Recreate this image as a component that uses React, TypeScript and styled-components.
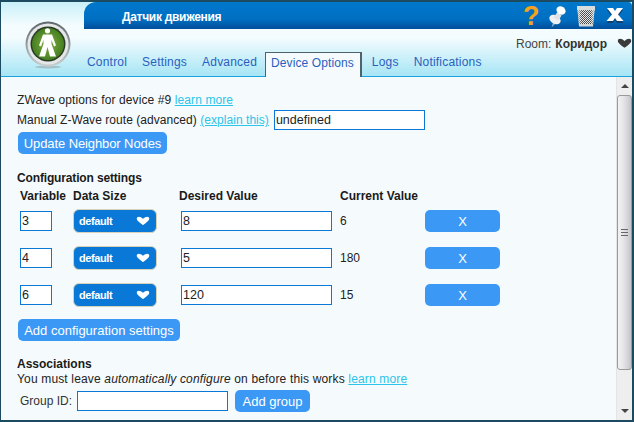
import React from 'react';
import styled, { createGlobalStyle } from 'styled-components';

const GlobalStyle = createGlobalStyle`
    html, body {
        margin: 0;
        padding: 0;
        overflow: hidden;
    }
    body {
        font-family: "Liberation Sans", Arial, sans-serif;
        font-size: 12px;
        color: #222;
    }
`;

const Frame = styled.div`
    width: 634px;
    height: 422px;
    box-sizing: border-box;
    padding: 2px 2px 2px 1px;
    background: #1c4a60;
    display: flex;
    flex-direction: column;
`;

const Header = styled.header`
    height: 75px;
    flex: none;
    display: flex;
    background: linear-gradient(#c8f0f9 0%, #f4fcfe 32%, #f4fcfe 48%, #a6e5f5 100%);
    border-bottom: 1px solid #1aa3dc;
    box-sizing: border-box;
`;

const LogoColumn = styled.div`
    width: 83px;
    flex: none;
    padding: 19px 0 0 24px;
    box-sizing: border-box;
`;

const HeaderMain = styled.div`
    flex: 1;
    min-width: 0;
    display: flex;
    flex-direction: column;
`;

const TitleBar = styled.div`
    height: 27px;
    flex: none;
    display: flex;
    align-items: center;
    justify-content: space-between;
    padding: 0 8px 0 38px;
    border-top-left-radius: 12px;
    border-top-right-radius: 4px;
    background: linear-gradient(#0078cc 0%, #006fc2 65%, #004e9a 100%);
`;

const Title = styled.div`
    margin-top: 2px;
    color: #fff;
    font-size: 12px;
    font-weight: bold;
    letter-spacing: -0.3px;
`;

const TitleIcons = styled.div`
    display: flex;
    align-items: center;
    gap: 10px;
`;

const HelpMark = styled.span`
    width: 16px;
    font-size: 27px;
    line-height: 24px;
    font-weight: bold;
    text-align: center;
    color: #f7a21b;
`;

const RoomRow = styled.div`
    height: 23px;
    flex: none;
    box-sizing: border-box;
    padding-top: 6px;
    display: flex;
    align-items: center;
    justify-content: flex-end;
    color: #444;
`;

const RoomName = styled.b`
    margin-left: 4px;
    margin-right: 10px;
    color: #333;
`;

const TabRow = styled.nav`
    display: flex;
    align-items: flex-end;
    height: 24px;
    padding-left: 3px;
`;

const Tab = styled.a<{ $active?: boolean }>`
    box-sizing: border-box;
    height: ${(p) => (p.$active ? '25px' : '24px')};
    margin-bottom: ${(p) => (p.$active ? '-1px' : '0')};
    padding: ${(p) => (p.$active ? '3px 6px 0 5px' : '3px 0 0 0')};
    margin-right: ${(p) => (p.$active ? '10px' : '15px')};
    margin-left: ${(p) => (p.$active ? '-7px' : '0')};
    color: #2a5fc0;
    background: ${(p) => (p.$active ? '#f5fbfd' : 'transparent')};
    border: ${(p) => (p.$active ? '1px solid #50626c' : '0')};
    border-bottom: 0;
    border-right-width: ${(p) => (p.$active ? '2px' : '0')};
    letter-spacing: ${(p) => (p.$active ? '0.1px' : '0.2px')};
`;

const Body = styled.div`
    flex: 1;
    min-height: 0;
    display: flex;
    background: #f5fbfd;
`;

const Content = styled.main`
    flex: 1;
    min-width: 0;
    padding: 16px 0 0 16px;
`;

const TextLine = styled.div<{ $spacing: number }>`
    height: 15px;
    line-height: 15px;
    white-space: nowrap;
    letter-spacing: ${(p) => p.$spacing}px;
`;

const RouteLine = styled.div`
    display: flex;
    align-items: center;
    height: 20px;
    margin-top: 2px;
    white-space: nowrap;
    letter-spacing: 0.05px;
`;

const Link = styled.a`
    color: #2cc4e8;
    text-decoration: underline;
`;

const Field = styled.input<{ $width: number }>`
    box-sizing: border-box;
    width: ${(p) => p.$width}px;
    height: 20px;
    padding: 0 1px;
    border: 1px solid #0a78d6;
    border-radius: 0;
    outline: 0;
    background: #fff;
    color: #222;
    font-family: "Liberation Sans", Arial, sans-serif;
    font-size: 12.5px;
`;

const RouteField = styled(Field)`
    margin-left: 5px;
`;

const ActionButton = styled.button<{ $width: number }>`
    box-sizing: border-box;
    width: ${(p) => p.$width}px;
    height: 22px;
    padding: 1px 0 0;
    border: 0;
    border-radius: 5px;
    background: #3b99f5;
    color: #fff;
    font-family: "Liberation Sans", Arial, sans-serif;
    font-size: 13px;
    text-align: center;
`;

const UpdateButton = styled(ActionButton)`
    display: block;
    margin: 2px 0 0 1px;
    letter-spacing: -0.1px;
`;

const AddButton = styled(ActionButton)`
    display: block;
    margin: 6px 0 0 1px;
`;

const SectionTitle = styled.div`
    margin-top: 16px;
    height: 15px;
    line-height: 15px;
    font-weight: bold;
    color: #1a1a1a;
`;

const ConfigTitle = styled(SectionTitle)`
    margin-top: 17px;
    letter-spacing: -0.15px;
`;

const ConfigGrid = styled.div`
    margin-left: 3px;
    display: grid;
    grid-template-columns: 53px 108px 159px 85px 75px;
    justify-content: start;
`;

const HeadCell = styled.div<{ $shift?: number }>`
    height: 16px;
    line-height: 20px;
    margin-left: ${(p) => p.$shift ?? 0}px;
    font-weight: bold;
    white-space: nowrap;
    color: #1a1a1a;
`;

const Cell = styled.div`
    height: 37px;
    display: flex;
    align-items: center;
`;

const SizeSelect = styled.div`
    box-sizing: border-box;
    width: 84px;
    height: 24px;
    display: flex;
    align-items: center;
    justify-content: space-between;
    padding: 0 6px 0 5px;
    border: 1px solid #d8d2b8;
    border-radius: 6px;
    background: #0a78d6;
    color: #fff;
    font-size: 11px;
    font-weight: bold;
    letter-spacing: -0.4px;
`;

const GroupRow = styled.div`
    display: flex;
    align-items: center;
    height: 22px;
    margin-top: 3px;
    padding-left: 3px;
    color: #333;
`;

const GroupField = styled(Field)`
    margin-left: 5px;
    margin-right: 7px;
`;

const Scrollbar = styled.aside`
    width: 16px;
    flex: none;
    display: flex;
    flex-direction: column;
    background: #eeeeee;
    box-sizing: border-box;
    border-left: 1px solid #e4e4e4;
`;

const ScrollArrow = styled.div<{ $down?: boolean }>`
    height: 18px;
    flex: none;
    display: flex;
    align-items: center;
    justify-content: center;
    &::after {
        content: '';
        border-left: 4px solid transparent;
        border-right: 4px solid transparent;
        ${(p) => (p.$down ? 'border-top: 4px solid #444;' : 'border-bottom: 4px solid #444;')}
    }
`;

const ScrollThumb = styled.div`
    height: 275px;
    flex: none;
    box-sizing: border-box;
    display: flex;
    align-items: center;
    justify-content: center;
    border: 1px solid #9a9a9a;
    border-radius: 3px;
    background: linear-gradient(90deg, #f2f2f4 0%, #e4e4e8 45%, #c4c4ca 100%);
`;

const ThumbGrip = styled.div`
    width: 7px;
    height: 7px;
    background: repeating-linear-gradient(#666 0 1px, transparent 1px 3px);
`;

const ScrollGap = styled.div`
    flex: 1;
`;

const DeviceLogo = () => (
    <svg width="46" height="48" viewBox="0 0 46 48">
        <defs>
            <radialGradient id="green" cx="50%" cy="50%" r="55%">
                <stop offset="0%" stopColor="#82b042" />
                <stop offset="100%" stopColor="#3f7a1c" />
            </radialGradient>
            <linearGradient id="ring" x1="0" y1="0" x2="0" y2="1">
                <stop offset="0%" stopColor="#5f666a" />
                <stop offset="100%" stopColor="#c9ced0" />
            </linearGradient>
        </defs>
        <ellipse cx="23" cy="46" rx="13" ry="1.5" fill="#9aa5a8" opacity="0.6" />
        <circle cx="23" cy="23" r="22.5" fill="url(#ring)" />
        <circle cx="23" cy="23" r="20.5" fill="#e4e8e8" />
        <circle cx="23" cy="23" r="17.5" fill="#2b3a26" />
        <circle cx="23" cy="23" r="16" fill="url(#green)" />
        <circle cx="22.5" cy="9.8" r="2.6" fill="#fff" />
        <path
            d="M18 13.5 L27 13.5 L31 24.5 L29 25.5 L26.5 19 L26.5 23 L31 35.5 L25 35.5 L22.5 26 L20 35.5 L14 35.5 L18.5 23 L18.5 19 L16 25.5 L14 24.5 Z"
            fill="#fff"
        />
    </svg>
);

const PinIcon = () => (
    <svg width="17" height="25" viewBox="0 0 17 25">
        <path d="M4 20 L2.5 24.5 L6.5 20.5 Z" fill="#9fb0bc" />
        <ellipse cx="6" cy="16.5" rx="6" ry="4.2" fill="#eef0f2" transform="rotate(30 6 16.5)" />
        <path d="M8.5 9 L12.5 12.5 L9.5 17.5 L4.5 14.5 Z" fill="#dfe3e6" />
        <ellipse cx="12" cy="7.5" rx="4.8" ry="4" fill="#fff" transform="rotate(35 12 7.5)" />
    </svg>
);

const TrashIcon = () => (
    <svg width="20" height="22" viewBox="0 0 20 22">
        <defs>
            <pattern id="mesh" width="2" height="2" patternUnits="userSpaceOnUse">
                <rect width="2" height="2" fill="#e8e8e8" />
                <rect width="1" height="1" fill="#444" />
                <rect x="1" y="1" width="1" height="1" fill="#555" />
            </pattern>
            <linearGradient id="can" x1="0" y1="0" x2="1" y2="0">
                <stop offset="0%" stopColor="#e4e8e8" stopOpacity="0.9" />
                <stop offset="22%" stopColor="#e4e8e8" stopOpacity="0" />
                <stop offset="78%" stopColor="#e4e8e8" stopOpacity="0" />
                <stop offset="100%" stopColor="#e4e8e8" stopOpacity="0.9" />
            </linearGradient>
        </defs>
        <path d="M1 1 H19 V5 H1 Z" fill="#d8dcdc" />
        <path d="M1.5 5 H18.5 L17 21 H3 Z" fill="url(#mesh)" />
        <path d="M1.5 5 H18.5 L17 21 H3 Z" fill="url(#can)" />
        <path d="M3 19 H17 L17 21.5 H3 Z" fill="#d0d4d4" />
    </svg>
);

const CloseIcon = () => (
    <svg width="18" height="17" viewBox="0 0 18 17">
        <path d="M1 2 H7 L9 5 L11 2 H17 L12 8.5 L17.5 15 H11 L9 12 L7 15 H0.5 L6 8.5 Z" fill="#11406f" transform="translate(0 1)" />
        <path d="M1 1 H7 L9 4 L11 1 H17 L12 7.5 L17.5 14 H11 L9 11 L7 14 H0.5 L6 7.5 Z" fill="#fff" />
    </svg>
);

const Chevron = ({ color, width }: { color: string; width: number }) => (
    <svg width={width} height={width * 0.7} viewBox="0 0 20 14">
        <path d="M1 4 Q1 1 4 1 Q7 1 10 4 Q13 1 16 1 Q19 1 19 4 Q19 7 10 13 Q1 7 1 4 Z" fill={color} />
    </svg>
);

const tabs = ['Control', 'Settings', 'Advanced', 'Device Options', 'Logs', 'Notifications'];

const configRows = [
    { variable: '3', desired: '8', current: '6' },
    { variable: '4', desired: '5', current: '180' },
    { variable: '6', desired: '120', current: '15' },
];

const App: React.FC = () => {
    return (
        <Frame>
            <GlobalStyle />
            <Header>
                <LogoColumn>
                    <DeviceLogo />
                </LogoColumn>
                <HeaderMain>
                    <TitleBar>
                        <Title>Датчик движения</Title>
                        <TitleIcons>
                            <HelpMark>?</HelpMark>
                            <PinIcon />
                            <TrashIcon />
                            <CloseIcon />
                        </TitleIcons>
                    </TitleBar>
                    <RoomRow>
                        Room: <RoomName>Коридор</RoomName>
                        <Chevron color="#3a3a3a" width={15} />
                    </RoomRow>
                    <TabRow>
                        {tabs.map((tab) => (
                            <Tab key={tab} $active={tab === 'Device Options'}>{tab}</Tab>
                        ))}
                    </TabRow>
                </HeaderMain>
            </Header>
            <Body>
                <Content>
                    <TextLine $spacing={0.1}>ZWave options for device #9 <Link>learn more</Link></TextLine>
                    <RouteLine>
                        Manual Z-Wave route (advanced)&nbsp;<Link>(explain this)</Link>
                        <RouteField $width={151} defaultValue="undefined" />
                    </RouteLine>
                    <UpdateButton $width={149}>Update Neighbor Nodes</UpdateButton>
                    <ConfigTitle>Configuration settings</ConfigTitle>
                    <ConfigGrid>
                        <HeadCell>Variable</HeadCell>
                        <HeadCell>Data Size</HeadCell>
                        <HeadCell $shift={-2}>Desired Value</HeadCell>
                        <HeadCell>Current Value</HeadCell>
                        <HeadCell />
                        {configRows.map((row) => (
                            <React.Fragment key={row.variable}>
                                <Cell><Field $width={32} defaultValue={row.variable} /></Cell>
                                <Cell><SizeSelect>default<Chevron color="#fff" width={14} /></SizeSelect></Cell>
                                <Cell><Field $width={151} defaultValue={row.desired} /></Cell>
                                <Cell>{row.current}</Cell>
                                <Cell><ActionButton $width={75}>X</ActionButton></Cell>
                            </React.Fragment>
                        ))}
                    </ConfigGrid>
                    <AddButton $width={162}>Add configuration settings</AddButton>
                    <SectionTitle>Associations</SectionTitle>
                    <TextLine $spacing={0.16}>You must leave <i>automatically configure</i> on before this works <Link>learn more</Link></TextLine>
                    <GroupRow>
                        Group ID:
                        <GroupField $width={151} />
                        <ActionButton $width={75}>Add group</ActionButton>
                    </GroupRow>
                </Content>
                <Scrollbar>
                    <ScrollArrow />
                    <ScrollThumb><ThumbGrip /></ScrollThumb>
                    <ScrollGap />
                    <ScrollArrow $down />
                </Scrollbar>
            </Body>
        </Frame>
    );
};

export default App;
